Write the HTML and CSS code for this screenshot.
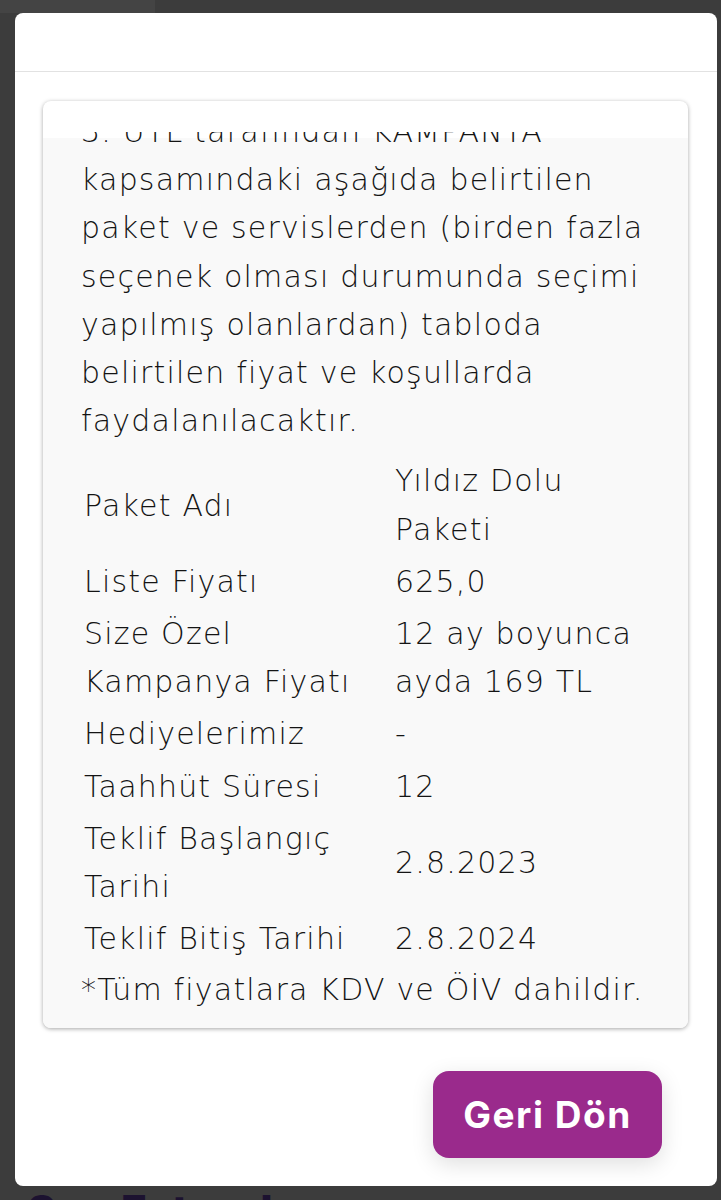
FILE: index.html
```html
<!DOCTYPE html>
<html lang="tr">
<head>
<meta charset="utf-8">
<title>Kampanya Detayı</title>
<link rel="stylesheet" href="styles.css">
</head>
<body>
<div class="topbar"><div class="topbar-tab"></div></div>
<div class="modal">
  <div class="modal-header"></div>
  <div class="modal-body">
    <div class="card">
      <div class="scroll">
        <div class="scroll-content">
          <p class="para">3. UTL tarafından KAMPANYA kapsamındaki aşağıda belirtilen paket ve servislerden (birden fazla seçenek olması durumunda seçimi yapılmış olanlardan) tabloda belirtilen fiyat ve koşullarda faydalanılacaktır.</p>
          <table class="offer">
            <tbody>
              <tr><td class="label">Paket Adı</td><td class="value">Yıldız Dolu Paketi</td></tr>
              <tr><td class="label">Liste Fiyatı</td><td class="value">625,0</td></tr>
              <tr><td class="label">Size Özel Kampanya Fiyatı</td><td class="value">12 ay boyunca ayda 169 TL</td></tr>
              <tr><td class="label">Hediyelerimiz</td><td class="value">-</td></tr>
              <tr><td class="label">Taahhüt Süresi</td><td class="value">12</td></tr>
              <tr><td class="label">Teklif Başlangıç Tarihi</td><td class="value">2.8.2023</td></tr>
              <tr><td class="label">Teklif Bitiş Tarihi</td><td class="value">2.8.2024</td></tr>
            </tbody>
          </table>
          <p class="note">*Tüm fiyatlara KDV ve ÖİV dahildir.</p>
        </div>
      </div>
    </div>
    <div class="actions">
      <button class="btn-back" type="button">Geri Dön</button>
    </div>
  </div>
</div>
<h2 class="page-title">Son Faturalarınız</h2>
</body>
</html>
```

FILE: styles.css
```css
html, body {
  margin: 0;
  padding: 0;
}
body {
  background: #3c3c3c;
  font-family: "DejaVu Sans", Inter, sans-serif;
  height: 1200px;
  overflow: hidden;
}
.topbar {
  height: 13px;
  display: flex;
}
.topbar-tab {
  width: 155px;
  background: #444444;
}
.modal {
  margin: 0 4px 0 15px;
  height: 1173px;
  background: #ffffff;
  border-radius: 8px;
  display: flex;
  flex-direction: column;
  overflow: hidden;
}
.modal-header {
  height: 58px;
  border-bottom: 1px solid #e2e2e2;
  flex: none;
}
.modal-body {
  padding: 29px 29px 28px 28px;
  display: flex;
  flex-direction: column;
  flex: 1;
}
.card {
  height: 927px;
  border-radius: 8px;
  background: #ffffff;
  box-shadow: 0 1px 4px rgba(0, 0, 0, 0.35);
  padding-top: 31px;
  box-sizing: border-box;
  overflow: hidden;
  display: flex;
  flex-direction: column;
}
.scroll {
  flex: 1;
  overflow: hidden;
  background: linear-gradient(#ffffff 0, #ffffff 6px, #f9f9f9 6px);
  padding: 0 36px 0 38px;
}
.scroll-content {
  margin-top: -24px;
  color: #141414;
  font-family: "DejaVu Sans", sans-serif;
  font-size: 30px;
  font-weight: 200;
  letter-spacing: 1.2px;
  line-height: 48.2px;
}
.para {
  margin: 0;
}
.offer {
  margin-top: 9px;
  width: 572px;
  table-layout: fixed;
  font-size: 30px;
  line-height: 48.2px;
  color: #141414;
}
.offer td {
  padding: 1px;
  vertical-align: middle;
}
.offer td.label {
  width: 307px;
}
.note {
  margin: 0;
}
.actions {
  display: flex;
  justify-content: flex-end;
  padding: 43px 26px 0 0;
}
.btn-back {
  width: 229px;
  height: 87px;
  border: none;
  border-radius: 16px;
  background: #9a2a8c;
  color: #ffffff;
  font-family: Inter, "DejaVu Sans", sans-serif;
  font-weight: 700;
  font-size: 37px;
  letter-spacing: 1.5px;
  box-shadow: 0 6px 22px rgba(0, 0, 0, 0.13);
  padding: 0;
}
.page-title {
  margin: 3px 0 0 27px;
  font-family: Inter, sans-serif;
  font-size: 44px;
  font-weight: 800;
  color: #1c1230;
  line-height: 1;
}
```
